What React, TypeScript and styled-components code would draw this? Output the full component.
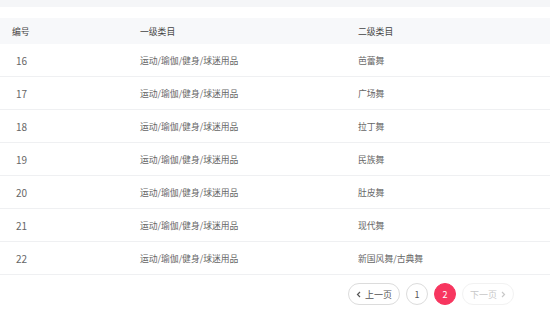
import React from 'react'
import styled, { createGlobalStyle } from 'styled-components'

const GlobalStyle = createGlobalStyle`
  html, body {
    margin: 0;
    padding: 0;
    background: #fff;
    font-family: "Noto Sans CJK SC", "Noto Sans", sans-serif;
  }
`

const Page = styled.div`
  width: 550px;
  height: 328px;
  overflow: hidden;
  background: #fff;
`

const TopBand = styled.div`
  height: 7px;
  background: #f5f6f8;
  margin-bottom: 11px;
`

const Row = styled.div<{ $head?: boolean }>`
  display: grid;
  grid-template-columns: 128px 218px 1fr;
  align-items: center;
  padding-left: 12px;
  height: ${(p) => (p.$head ? '26px' : '32px')};
  background: ${(p) => (p.$head ? '#f7f8fa' : '#fff')};
  border-bottom: ${(p) => (p.$head ? 'none' : '1px solid #eff0f2')};
  font-size: 8.8px;
  color: ${(p) => (p.$head ? '#444' : '#666')};
`

const Cell = styled.div<{ $indent?: boolean }>`
  padding-left: ${(p) => (p.$indent ? '4px' : '0')};
  white-space: nowrap;
`

const Num = styled(Cell)`
  font-size: 10px;
`

const Pager = styled.div`
  display: flex;
  justify-content: flex-end;
  gap: 6px;
  padding: 8px 36px 0 0;
`

const PageButton = styled.button<{ $active?: boolean; $disabled?: boolean; $round?: boolean }>`
  height: 22px;
  min-width: 22px;
  padding: ${(p) => (p.$round ? '0' : '0 7px')};
  border-radius: 11px;
  box-sizing: border-box;
  display: inline-flex;
  align-items: center;
  justify-content: center;
  gap: 4px;
  font-family: inherit;
  font-size: 9px;
  line-height: 1;
  cursor: pointer;
  border: 1px solid ${(p) => (p.$active ? '#f7365f' : p.$disabled ? '#f2f2f2' : '#dcdcdc')};
  background: ${(p) => (p.$active ? '#f7365f' : '#fff')};
  color: ${(p) => (p.$active ? '#fff' : p.$disabled ? '#c8c8c8' : '#555')};
`

const Chevron = ({ dir }: { dir: 'left' | 'right' }) => (
  <svg width="5" height="7" viewBox="0 0 5 7">
    <path
      d={dir === 'left' ? 'M4 1 L1.5 3.5 L4 6' : 'M1 1 L3.5 3.5 L1 6'}
      fill="none"
      stroke="currentColor"
      strokeWidth="1.2"
    />
  </svg>
)

const rows = [
  { id: 16, sub: '芭蕾舞' },
  { id: 17, sub: '广场舞' },
  { id: 18, sub: '拉丁舞' },
  { id: 19, sub: '民族舞' },
  { id: 20, sub: '肚皮舞' },
  { id: 21, sub: '现代舞' },
  { id: 22, sub: '新国风舞/古典舞' },
]

export default function App() {
  return (
    <Page>
      <GlobalStyle />
      <TopBand />
      <Row $head>
        <Cell>编号</Cell>
        <Cell>一级类目</Cell>
        <Cell>二级类目</Cell>
      </Row>
      {rows.map((r) => (
        <Row key={r.id}>
          <Num $indent>{r.id}</Num>
          <Cell>运动/瑜伽/健身/球迷用品</Cell>
          <Cell>{r.sub}</Cell>
        </Row>
      ))}
      <Pager>
        <PageButton>
          <Chevron dir="left" />
          上一页
        </PageButton>
        <PageButton $round>1</PageButton>
        <PageButton $round $active>2</PageButton>
        <PageButton $disabled>
          下一页
          <Chevron dir="right" />
        </PageButton>
      </Pager>
    </Page>
  )
}
